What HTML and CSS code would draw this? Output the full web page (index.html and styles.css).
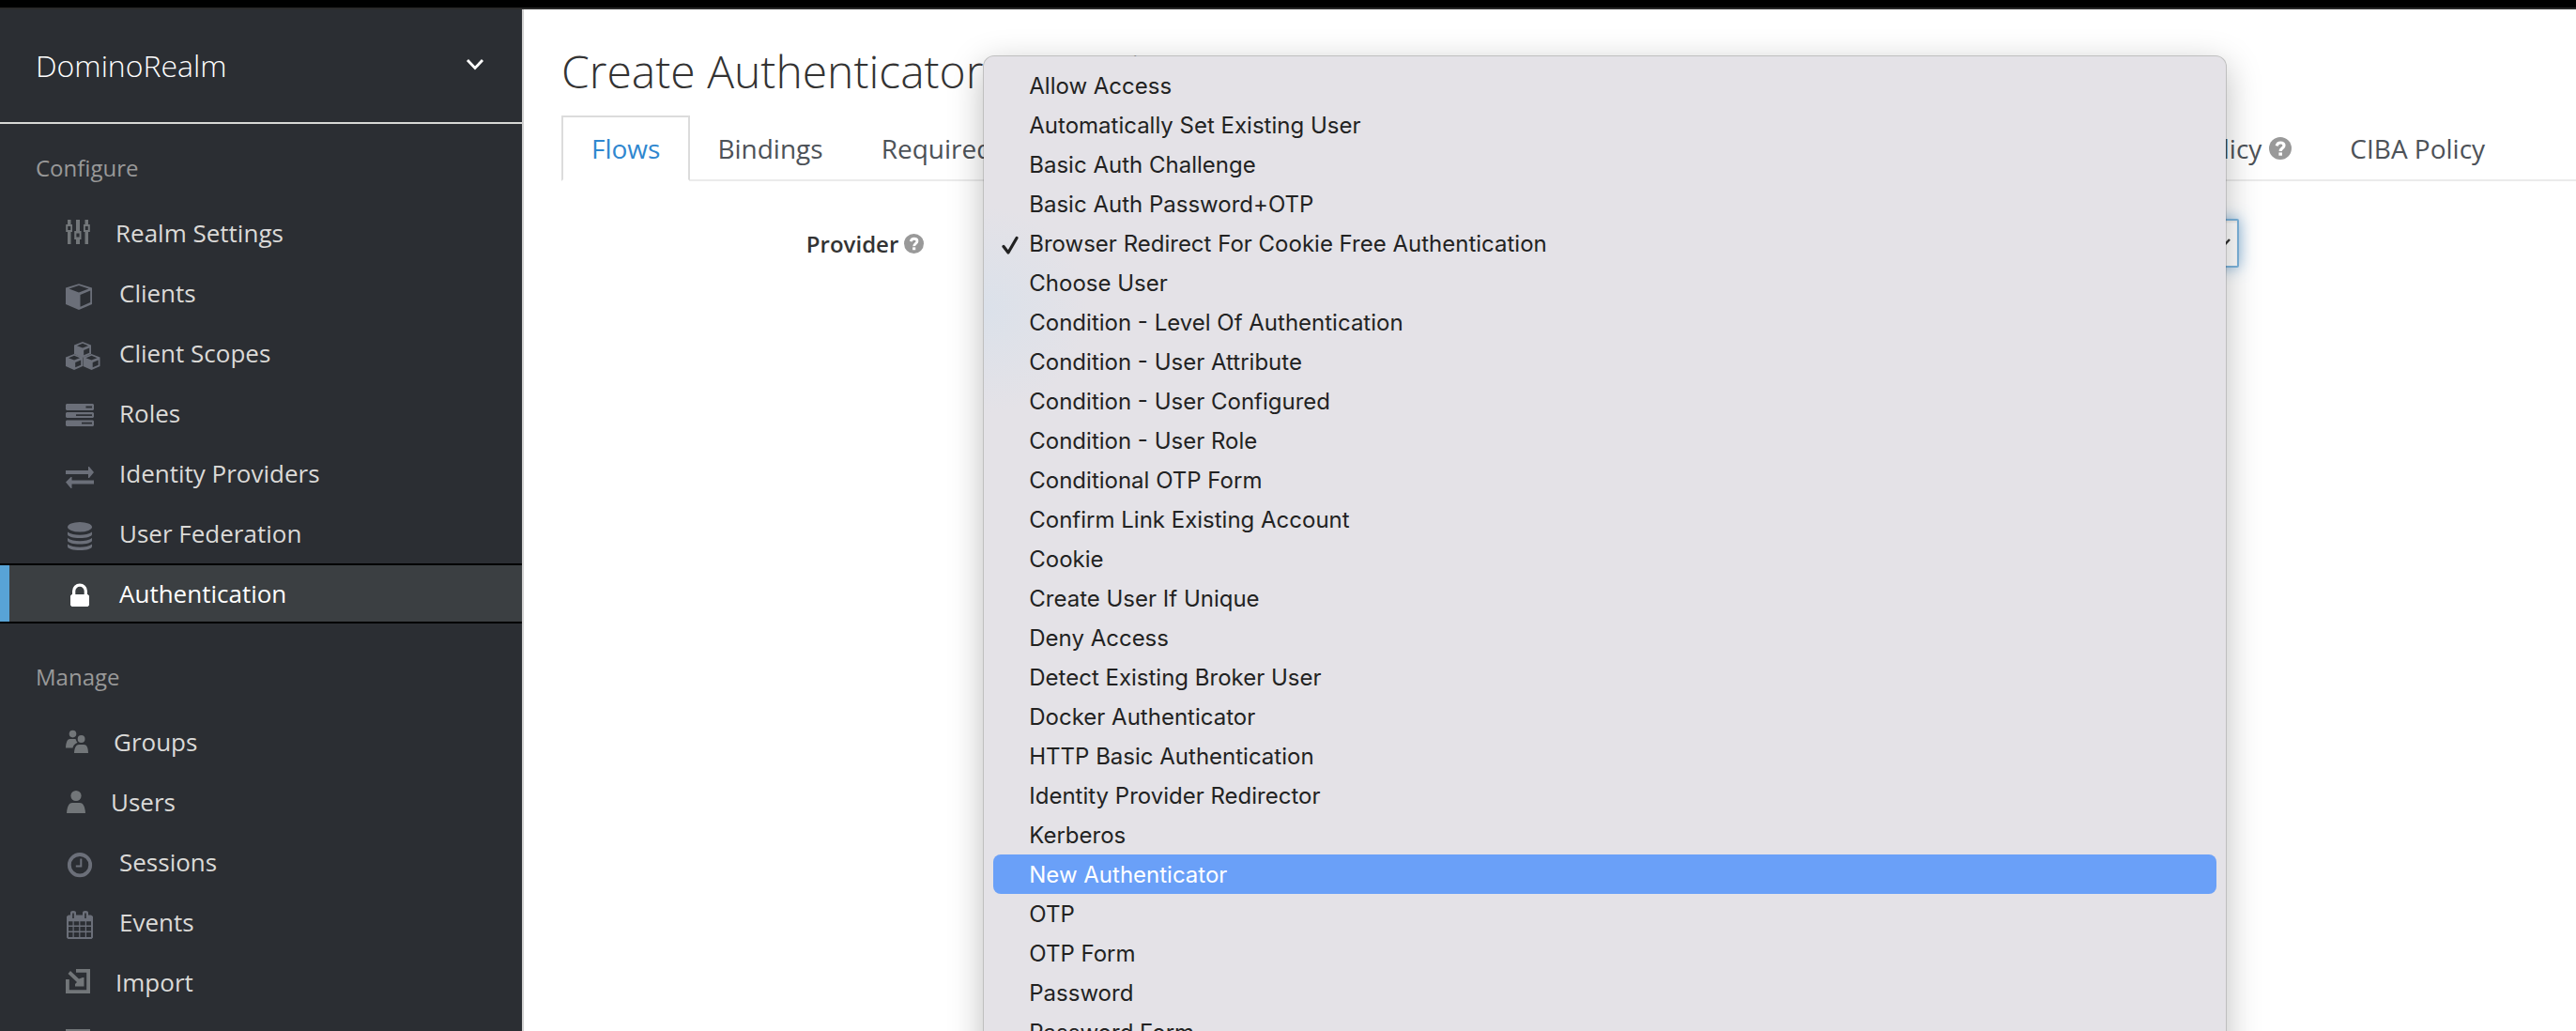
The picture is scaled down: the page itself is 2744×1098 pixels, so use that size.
FILE: index.html
```html
<!DOCTYPE html>
<html lang="en">
<head>
<meta charset="utf-8">
<meta name="viewport" content="width=device-width, initial-scale=1">
<title>Create Authenticator Execution</title>
<link rel="stylesheet" href="styles.css">
</head>
<body>
<div class="topbar"></div>
<div class="app">
  <aside class="sidebar">
    <button class="realm" type="button">DominoRealm
      <svg class="realm-arrow" width="20" height="14" viewBox="0 0 20 14"><path d="M2 2l8 8.500 8-8.500" fill="none" stroke="currentColor" stroke-width="2.800"/></svg>
    </button>
    <nav>
      <h2 class="nav-title">Configure</h2>
      <ul class="nav-list">
        <li><a class="nav-item" href="#">
          <svg class="icon pf" width="26" height="40" viewBox="0 12 26 40"><path d="M2 18h3.500v5h1.500v8H5.500v13H2V31H.2v-8H2zM2.200 25v4h3v-4zM11 18h4v12h1.500v9H15v5h-4v-5H9.200v-9H11zM11.400 32.500v4h3.200v-4zM20.500 18H24v5h1.800v8H24v13h-3.500V31H19v-8h1.500zM20.800 25v4h3v-4z" fill-rule="evenodd"/></svg>
          Realm Settings</a></li>
        <li><a class="nav-item" href="#">
          <svg class="icon" width="30" height="40" viewBox="0 12 30 40"><path d="M14 22.200L28 26.500V44L14 50 0 44V26.500zM14 24L3.500 27.500 14 31.500 24.500 27.500zM15.500 34v12.800L26.200 42V29.500z" fill-rule="evenodd"/></svg>
          Clients</a></li>
        <li><a class="nav-item" href="#">
          <svg class="icon" width="30" height="40" viewBox="0 12 30 40"><g fill-rule="evenodd"><path id="cube" d="M18 20l9 3.500v9.500l-9 4-9-4v-9.500zM18 21.800l-6 2.400 6 2.400 6-2.400zM19.200 29v5.300l6-2.600v-5.200z"/><use href="#cube" x="-9" y="13"/><use href="#cube" x="9.500" y="13"/></g></svg>
          Client Scopes</a></li>
        <li><a class="nav-item" href="#">
          <svg class="icon" width="30" height="40" viewBox="0 12 30 40"><path d="M1 22h28l1 1v5l-1 1H1l-1-1v-5zM21.500 24.600v1.800H28v-1.800zM1 31h28l1 1v4l-1 1H1l-1-1v-4zM11 33.200v1.800h17v-1.800zM1 39.500h28l1 1V45l-1 1H1l-1-1v-4.500zM17 41.800v1.800h11v-1.800z" fill-rule="evenodd"/></svg>
          Roles</a></li>
        <li><a class="nav-item" href="#">
          <svg class="icon" width="30" height="40" viewBox="0 12 30 40"><path d="M0 29h24v-4h1l5 6-5 6h-1v-4H0zM30 39.500H6.500V36h-1L0 41.500 5.500 48h1v-4.500H30z"/></svg>
          Identity Providers</a></li>
        <li><a class="nav-item" href="#">
          <svg class="icon" width="30" height="40" viewBox="0 12 30 40"><ellipse cx="15" cy="25.200" rx="13" ry="5.200"/><path id="disk" d="M2 30.500c3 2.500 8 3.200 13 3.200s10-.7 13-3.200V33c0 2.500-6 4-13 4S2 35.500 2 33z"/><use href="#disk" y="6.500"/><use href="#disk" y="13"/></svg>
          User Federation</a></li>
        <li><a class="nav-item active" href="#" aria-current="page">
          <svg class="icon" width="30" height="40" viewBox="0 12 30 40"><path d="M7 33v-3.500a8 8 0 0 1 16 0V33h.5l1.500 1.500v10L23.500 46h-17L5 44.500v-10L6.500 33zM10.300 33h9.400v-3.500a4.700 4.700 0 0 0-9.400 0z" fill-rule="evenodd"/></svg>
          Authentication</a></li>
      </ul>
      <h2 class="nav-title">Manage</h2>
      <ul class="nav-list">
        <li><a class="nav-item" href="#">
          <svg class="icon pf" width="24" height="40" viewBox="0 12 24 40"><circle cx="7.500" cy="23.600" r="3.800"/><circle cx="16.600" cy="29" r="3.900"/><path d="M0 38.500C.3 32 2 29 4.500 29h6l1 2.500 1 1.200c-3 1.500-4.500 3-5 5.800zM9 44c.3-6 2.300-9 5-9h5.500c2.700 0 4.500 3 4.500 9z"/></svg>
          Groups</a></li>
        <li><a class="nav-item" href="#">
          <svg class="icon pf" width="21" height="40" viewBox="0 12 21 40"><circle cx="11" cy="25.500" r="5.600"/><path d="M1 44c.5-8 3-11 6-11h8c3 0 5.500 3 6 11z"/></svg>
          Users</a></li>
        <li><a class="nav-item" href="#">
          <svg class="icon" width="30" height="40" viewBox="0 12 30 40"><circle cx="15" cy="35.200" r="11.200" fill="none" stroke="currentColor" stroke-width="3.800"/><path d="M16.300 28.500v8h-5.500" fill="none" stroke="currentColor" stroke-width="2"/></svg>
          Sessions</a></li>
        <li><a class="nav-item" href="#">
          <svg class="icon" width="30" height="40" viewBox="0 12 30 40"><path d="M3 24.500h2V22q0-2 3-2t3 2v2.500h7V22q0-2 3-2t3 2v2.500h3l2 1.500v22.500L27.500 50H2.500L1 48.500V26zM7.200 22.500v5.500h1.600v-5.500zM20.200 22.500v5.500h1.600v-5.500zM3 31.200v4.300h4.500v-4.300zM8.700 31.200v4.300h5.500v-4.300zM15.400 31.200v4.300h5.400v-4.300zM22 31.200v4.300h5v-4.300zM3 37v4.500h4.500V37zM8.700 37v4.500h5.500V37zM15.400 37v4.500h5.400V37zM22 37v4.500h5V37zM3 43v5h4.500v-5zM8.700 43v5h5.500v-5zM15.400 43v5h5.400v-5zM22 43v5h5v-5z" fill-rule="evenodd"/></svg>
          Events</a></li>
        <li><a class="nav-item" href="#">
          <svg class="icon pf" width="26" height="40" viewBox="0 12 26 40"><path d="M11 18h15v26H0V29h3.800v11.300h18.400V21.700H11zM5 20l9 8.500 4-1.500h1.500v9.500H10V34l2-2L2.500 23z"/></svg>
          Import</a></li>
        <li><a class="nav-item" href="#">
          <svg class="icon pf" width="26" height="40" viewBox="0 12 26 40"><path d="M0 18h26v9h-4v-5H4v18h18v-5h4v9H0z"/></svg>
          Export</a></li>
      </ul>
    </nav>
  </aside>

  <main class="content">
    <h1 class="page-title">Create Authenticator Execution</h1>
    <nav class="tabs">
      <a class="tab selected" href="#" aria-current="page">Flows</a>
      <a class="tab" href="#">Bindings</a>
      <a class="tab" href="#">Required Actions</a>
      <a class="tab" href="#">Password Policy</a>
      <a class="tab" href="#">OTP Policy</a>
      <a class="tab" href="#">WebAuthn Policy
        <svg class="help" width="24" height="24" viewBox="0 0 24 24"><use href="#help-shape"/></svg></a>
      <a class="tab" href="#">WebAuthn Passwordless Policy
        <svg class="help" width="24" height="24" viewBox="0 0 24 24"><g id="help-shape"><circle cx="12" cy="12" r="12" fill="currentColor"/><path d="M8.200 9.300c.6-2.300 2-3.300 4-3.300 2.300 0 3.800 1.200 3.800 3 0 2.800-3.800 2.800-3.800 6" fill="none" stroke="#fff" stroke-width="3.200"/><path d="M10.400 16.400h3.600v3.300h-3.600z" fill="#fff"/></g></svg></a>
      <a class="tab" href="#">CIBA Policy</a>
    </nav>
    <form class="form">
      <label class="label" for="provider">Provider
        <svg class="help" width="21" height="21" viewBox="0 0 24 24"><use href="#help-shape"/></svg></label>
      <div class="field">
        <select class="select" id="provider"><option>Browser Redirect For Cookie Free Authentication</option></select>
        <svg class="select-arrow" width="18" height="12" viewBox="0 0 18 12"><path d="M2 2l7 7.500L16 2" fill="none" stroke="currentColor" stroke-width="2.500"/></svg>
        <ul class="menu" role="listbox" aria-label="Provider">
          <li class="option" role="option">Allow Access</li>
          <li class="option" role="option">Automatically Set Existing User</li>
          <li class="option" role="option">Basic Auth Challenge</li>
          <li class="option" role="option">Basic Auth Password+OTP</li>
          <li class="option" role="option" aria-selected="true"><svg class="check" width="18" height="20" viewBox="0 0 18 20"><path d="M2 11.500l5 6.500L16 2.500" fill="none" stroke="currentColor" stroke-width="3.200" stroke-linecap="round" stroke-linejoin="round"/></svg>Browser Redirect For Cookie Free Authentication</li>
          <li class="option" role="option">Choose User</li>
          <li class="option" role="option">Condition - Level Of Authentication</li>
          <li class="option" role="option">Condition - User Attribute</li>
          <li class="option" role="option">Condition - User Configured</li>
          <li class="option" role="option">Condition - User Role</li>
          <li class="option" role="option">Conditional OTP Form</li>
          <li class="option" role="option">Confirm Link Existing Account</li>
          <li class="option" role="option">Cookie</li>
          <li class="option" role="option">Create User If Unique</li>
          <li class="option" role="option">Deny Access</li>
          <li class="option" role="option">Detect Existing Broker User</li>
          <li class="option" role="option">Docker Authenticator</li>
          <li class="option" role="option">HTTP Basic Authentication</li>
          <li class="option" role="option">Identity Provider Redirector</li>
          <li class="option" role="option">Kerberos</li>
          <li class="option highlighted" role="option">New Authenticator</li>
          <li class="option" role="option">OTP</li>
          <li class="option" role="option">OTP Form</li>
          <li class="option" role="option">Password</li>
          <li class="option" role="option">Password Form</li>
        </ul>
      </div>
    </form>
  </main>
</div>
</body>
</html>
```
FILE: styles.css
```css
* {
  box-sizing: border-box;
}

body {
  margin: 0;
  height: 100vh;
  display: flex;
  flex-direction: column;
  overflow: hidden;
  background: #fff;
  color: #333;
  font-family: "Open Sans", "Noto Sans", sans-serif;
  font-size: 26px;
}

ul {
  list-style: none;
  margin: 0;
  padding: 0;
}

a {
  color: inherit;
  text-decoration: none;
}

.topbar {
  flex: none;
  height: 10px;
  background: #000;
  border-bottom: 2px solid #2a2a2a;
}

.app {
  flex: 1;
  min-height: 0;
  display: flex;
}

/* Sidebar */
.sidebar {
  flex: none;
  width: 558px;
  overflow: hidden;
  background: #2b2e33;
  border-right: 2px solid #d1d1d1;
}

.realm {
  display: flex;
  align-items: center;
  justify-content: space-between;
  width: 100%;
  height: 122px;
  padding: 0 40px 2px 38px;
  border: 0;
  border-bottom: 2px solid #d8d8d6;
  background: none;
  color: #fff;
  font: 300 32px "Open Sans", sans-serif;
}

.nav-title {
  margin: 0;
  padding: 29px 38px 19px;
  color: #999;
  font-size: 24px;
  font-weight: 400;
  line-height: 36px;
}

.nav-list {
  margin-bottom: 10px;
}

.nav-item {
  display: flex;
  align-items: center;
  gap: 27px;
  height: 64px;
  padding-left: 70px;
  color: #dbdad8;
}

.nav-item.active {
  padding-left: 0;
  border: solid #000;
  border-width: 2px 0;
  background: #3b3f42;
  color: #fff;
}

.nav-item.active::before {
  content: "";
  align-self: stretch;
  width: 10px;
  background: #58a3d6;
}

.nav-item.active .icon {
  margin-left: 33px;
  color: #fff;
}

.icon {
  flex: none;
  overflow: visible;
  fill: currentColor;
  color: #6b6f79;
}

.icon.pf {
  color: #727679;
}

/* Main column */
.content {
  flex: 1;
  min-width: 0;
  padding: 33px 0 0 40px;
}

.page-title {
  margin: 0 0 14px;
  font-size: 48px;
  font-weight: 300;
  line-height: 66px;
}

.tabs {
  display: flex;
  border-bottom: 2px solid #ebebeb;
  color: #4d5258;
  font-size: 28px;
}

.tab {
  display: flex;
  align-items: center;
  gap: 8px;
  height: 70px;
  margin-bottom: -2px;
  padding: 0 33px 0 29px;
  white-space: nowrap;
}

.tab.selected {
  padding: 0 30px;
  border: 2px solid #dcdcdc;
  border-bottom-color: #fff;
  color: #2f87cf;
}

.help {
  flex: none;
  color: #999;
}

.form {
  display: grid;
  grid-template-columns: 18% 61.3%;
  column-gap: 85px;
  margin-top: 40px;
}

.label {
  display: flex;
  align-items: center;
  justify-content: flex-end;
  gap: 6px;
  font-size: 24px;
  font-weight: 600;
}

.field {
  position: relative;
}

.select {
  display: block;
  width: 100%;
  height: 52px;
  padding: 0 40px 0 20px;
  appearance: none;
  border: 2px solid #7db4dc;
  border-radius: 2px;
  background: #fff;
  box-shadow: inset 0 2px 2px rgba(0, 0, 0, 0.08), 0 0 16px rgba(82, 150, 205, 0.7);
  color: #333;
  font: 24px "Open Sans", sans-serif;
}

.select-arrow {
  position: absolute;
  top: 20px;
  right: 8px;
}

/* Open list of providers */
.menu {
  position: absolute;
  z-index: 1;
  top: -174px;
  left: -22px;
  right: 13px;
  padding: 10px;
  border: 1px solid rgba(0, 0, 0, 0.25);
  border-radius: 12px;
  background: radial-gradient(circle at 0 270px, #dbe1ea 0, #e4e2e7 110px) padding-box;
  box-shadow: 0 10px 36px rgba(0, 0, 0, 0.26);
  color: #222;
  font-family: Inter, "Liberation Sans", sans-serif;
  font-size: 24px;
}

.option {
  position: relative;
  height: 42px;
  padding-left: 38px;
  line-height: 44px;
  white-space: nowrap;
}

.option.highlighted {
  border-radius: 8px;
  background: #6aa0f8;
  color: #fff;
}

.check {
  position: absolute;
  top: 13px;
  left: 9px;
}
```
